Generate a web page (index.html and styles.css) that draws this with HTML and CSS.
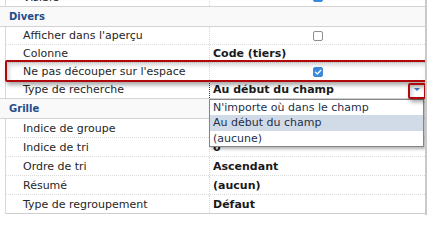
FILE: index.html
```html
<!DOCTYPE html>
<html lang="fr">
<head>
<meta charset="utf-8">
<title>Propriétés</title>
<link rel="stylesheet" href="styles.css">
</head>
<body>
<div class="grid">
  <div class="row partial">
    <div class="label">Visible</div>
    <div class="value center"><span class="cb on"><svg viewBox="0 0 10 10"><polyline points="2.4,5.1 4.3,7 7.8,3.2"/></svg></span></div>
  </div>

  <div class="cat">Divers</div>
  <div class="rows divers">
    <div class="row">
      <div class="label">Afficher dans l'aperçu</div>
      <div class="value center"><span class="cb"></span></div>
    </div>
    <div class="row">
      <div class="label">Colonne</div>
      <div class="value">Code (tiers)</div>
    </div>
    <div class="row">
      <div class="label">Ne pas découper sur l'espace</div>
      <div class="value center"><span class="cb on"><svg viewBox="0 0 10 10"><polyline points="2.4,5.1 4.3,7 7.8,3.2"/></svg></span></div>
    </div>
    <div class="row">
      <div class="label">Type de recherche</div>
      <div class="value editing"><span>Au début du champ</span><span class="arrow"></span></div>
    </div>
  </div>

  <div class="cat">Grille</div>
  <div class="rows grille">
    <div class="row">
      <div class="label">Indice de groupe</div>
      <div class="value"></div>
    </div>
    <div class="row">
      <div class="label">Indice de tri</div>
      <div class="value">0</div>
    </div>
    <div class="row">
      <div class="label">Ordre de tri</div>
      <div class="value">Ascendant</div>
    </div>
    <div class="row">
      <div class="label">Résumé</div>
      <div class="value">(aucun)</div>
    </div>
    <div class="row">
      <div class="label">Type de regroupement</div>
      <div class="value">Défaut</div>
    </div>
  </div>

  <ul class="dropdown">
    <li>N'importe où dans le champ</li>
    <li class="sel">Au début du champ</li>
    <li>(aucune)</li>
  </ul>

  <div class="hl hl-row"></div>
  <div class="hl hl-arrow"></div>
</div>
</body>
</html>
```

FILE: styles.css
```css
html, body {
  margin: 0;
  padding: 0;
  background: #ffffff;
}

body {
  font-family: "DejaVu Sans", "Noto Sans", sans-serif;
  font-size: 11px;
  color: #262626;
}

.grid {
  position: relative;
  width: 425px;
  height: 215px;
  border-right: 2px solid #c9c9c9;
  overflow: hidden;
}

.row {
  display: flex;
  align-items: center;
  box-sizing: border-box;
  margin-left: 5px;
  border-left: 1px solid #d9d9d9;
  white-space: nowrap;
}

.partial {
  height: 18px;
  margin-top: -12px;
}

.divers .row {
  height: 18px;
  border-bottom: 1px dotted #dadada;
}

.divers .row:last-child {
  height: 17px;
  border-bottom: none;
}

.grille .row {
  height: 19px;
  border-bottom: 1px dotted #dadada;
}

.grille .row:last-child {
  border-bottom: 1px solid #cfcfcf;
}

.label {
  width: 203px;
  flex: none;
  box-sizing: border-box;
  padding-left: 17px;
  align-self: stretch;
  display: flex;
  align-items: center;
}

.value {
  flex: 1;
  align-self: stretch;
  display: flex;
  align-items: center;
  border-left: 1px dotted #d6d6d6;
  padding-left: 3px;
  font-weight: bold;
  color: #1a1a1a;
}

.value.center {
  justify-content: center;
  padding-left: 0;
}

.value.editing {
  border-left: 1px dotted #3a3a3a;
  justify-content: space-between;
}

.arrow {
  width: 0;
  height: 0;
  margin-right: 5px;
  border-left: 3px solid transparent;
  border-right: 3px solid transparent;
  border-top: 3px solid #3b7cc7;
}

.cat {
  height: 21px;
  box-sizing: border-box;
  border-top: 1px solid #d3d3d3;
  border-bottom: 1px solid #d3d3d3;
  background: #f9f9f9;
  padding-left: 9px;
  font-size: 10px;
  font-weight: bold;
  line-height: 19px;
  color: #1f4c8b;
}

.cb {
  width: 10px;
  height: 10px;
  box-sizing: border-box;
  border: 1px solid #8f8f8f;
  border-radius: 2px;
  background: #ffffff;
  display: block;
}

.cb.on {
  background: #3b8ad9;
  border-color: #3b8ad9;
}

.cb svg {
  display: block;
  width: 10px;
  height: 10px;
  margin: -1px;
}

.cb polyline {
  fill: none;
  stroke: #ffffff;
  stroke-width: 1.3;
  stroke-linecap: round;
  stroke-linejoin: round;
}

.dropdown {
  position: absolute;
  left: 209px;
  top: 99px;
  width: 215px;
  height: 48px;
  box-sizing: border-box;
  margin: 0;
  padding: 0;
  list-style: none;
  display: flex;
  flex-direction: column;
  background: #ffffff;
  border: 1px solid #858585;
  box-shadow: 2px 2px 3px rgba(0, 0, 0, 0.3);
  color: #23304a;
}

.dropdown li {
  flex: 1;
  display: flex;
  align-items: center;
  padding-left: 3px;
  white-space: nowrap;
}

.dropdown li.sel {
  background: #d1dae7;
}

.hl {
  position: absolute;
  box-sizing: border-box;
  border: 2px solid #b1080b;
  border-radius: 2px;
  box-shadow: 2px 3px 4px rgba(0, 0, 0, 0.35), inset 2px 3px 4px rgba(0, 0, 0, 0.18);
}

.hl-row {
  left: 5px;
  top: 60px;
  width: 422px;
  height: 22px;
}

.hl-arrow {
  left: 408px;
  top: 83px;
  width: 18px;
  height: 16px;
}
```
